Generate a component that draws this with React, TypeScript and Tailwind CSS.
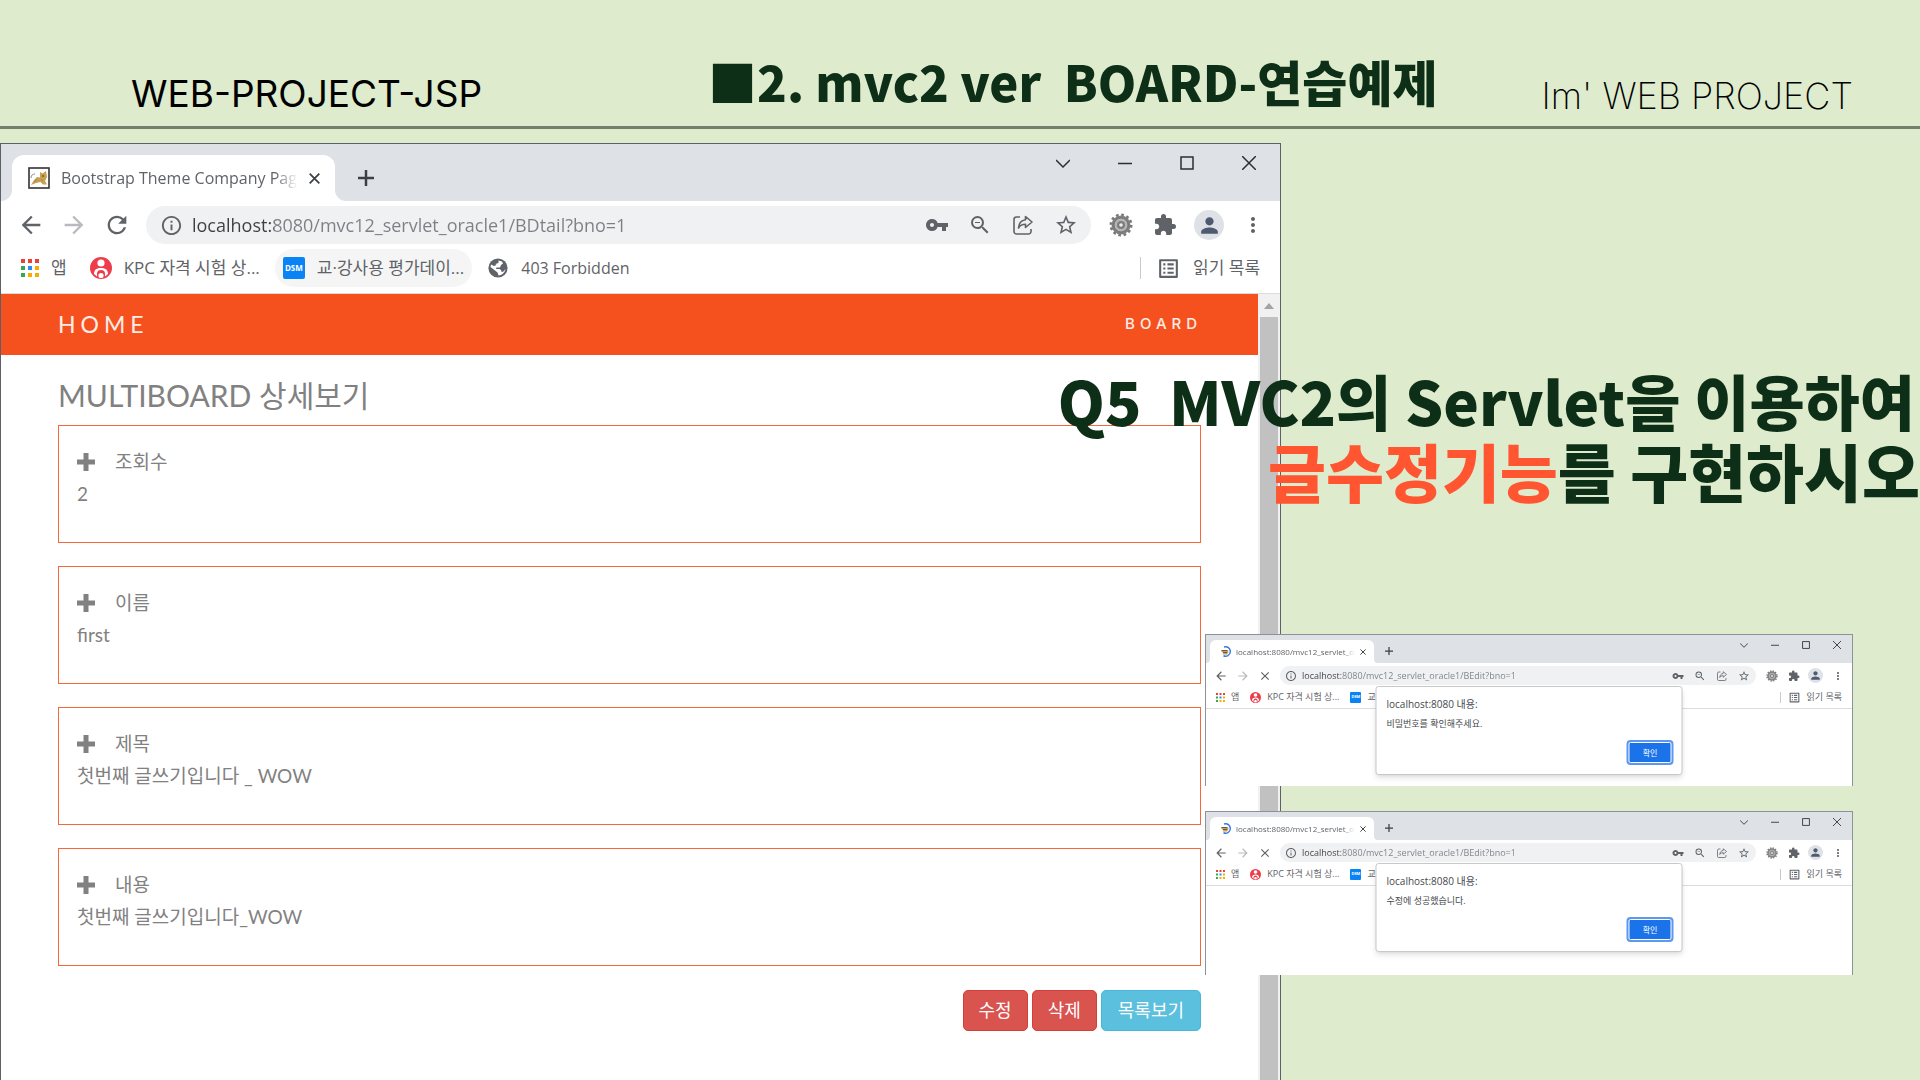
import React from "react";
import {
  MdArrowBack,
  MdArrowForward,
  MdClose,
  MdExtension,
  MdInfoOutline,
  MdListAlt,
  MdMoreVert,
  MdPerson,
  MdRefresh,
  MdStarBorder,
  MdVpnKey,
  MdZoomOut,
} from "react-icons/md";

type Size = "lg" | "sm";

const chrome = {
  lg: {
    strip: "h-[57px] pl-[11px]",
    tab: "w-[323px] h-[46px] pl-4 pr-[15px] gap-[11px] rounded-t-xl text-[16px]",
    foot: "size-[11px]",
    footCurveLeft: "rounded-br-xl",
    footCurveRight: "rounded-bl-xl",
    footLeft: "-left-[11px]",
    footRight: "-right-[11px]",
    favicon: "size-[22px]",
    tabClose: "size-[11px]",
    plus: "size-4 ml-[23px] mb-[15px]",
    control: "w-[62px] h-[38px]",
    controlIcon: "size-[14px]",
    toolbar: "h-[48px] pl-4 pr-3 gap-[15px]",
    nav: "size-[28px]",
    pill: "h-[38px] pl-[14px] pr-[13px]",
    info: "size-[23px] mr-[9px]",
    url: "text-[18px] bg-[linear-gradient(90deg,#3c4043_82px,#7c8085_82px)]",
    pillIcons: "gap-[19px]",
    pillIcon: "size-6",
    actions: "gap-[14px]",
    action: "size-[30px]",
    actionIcon: "size-6",
    person: "size-[25px]",
    bookmarks: "h-[45px] px-3 pb-[6px] gap-[7px] text-[17px]",
    bookmark: "h-[38px] px-2 gap-3 rounded-full",
    bookmarkIcon: "size-[22px]",
    apps: "size-[18px]",
    list: "size-[25px]",
    readSep: "h-[22px]",
    dsm: "size-[22px] text-[8px] rounded-[2px]",
  },
  sm: {
    strip: "h-[28px] pl-[4px]",
    tab: "w-[164px] h-[23px] pl-[10px] pr-2 gap-[5px] rounded-t-md text-[8px]",
    foot: "size-1",
    footCurveLeft: "rounded-br",
    footCurveRight: "rounded-bl",
    footLeft: "-left-1",
    footRight: "-right-1",
    favicon: "size-[11px]",
    tabClose: "size-[6px]",
    plus: "size-2 ml-[11px] mb-2",
    control: "w-[31px] h-[19px]",
    controlIcon: "size-2",
    toolbar: "h-[25px] pl-[8px] pr-[7px] gap-[8px]",
    nav: "size-[14px]",
    pill: "h-[19px] pl-[5px] pr-[6px]",
    info: "size-[12px] mr-[5px]",
    url: "text-[9px] bg-[linear-gradient(90deg,#3c4043_39px,#7c8085_39px)]",
    pillIcons: "gap-[10px]",
    pillIcon: "size-3",
    actions: "gap-[7px]",
    action: "size-[15px]",
    actionIcon: "size-3",
    person: "size-[13px]",
    bookmarks: "h-[21px] px-[6px] pb-[2px] gap-[3px] text-[9px]",
    bookmark: "h-[19px] px-1 gap-[6px] rounded-full",
    bookmarkIcon: "size-[11px]",
    apps: "size-[9px]",
    list: "size-[13px]",
    readSep: "h-[11px]",
    dsm: "size-[11px] text-[4px] rounded-[1px]",
  },
};

function CatIcon({ className }: { className: string }) {
  return (
    <svg viewBox="0 0 22 22" className={className}>
      <rect x="1" y="1" width="20" height="20" fill="#fff" stroke="#333" strokeWidth="1.6" />
      <path d="M3 18l3-5 3-3 3 .5L12 5l2.500 1.500L18 4l1 6-2 4 2 3.500h-4L12.500 15 8 16z" fill="#c9a04c" />
      <path d="M3 11c0-3 2-4 4-4M6 15l3-2M13 12l2 2" stroke="#8a8a8a" strokeWidth="1" fill="none" />
      <circle cx="15" cy="9" r=".8" fill="#333" />
    </svg>
  );
}

function LoadingIcon({ className }: { className: string }) {
  return (
    <svg viewBox="0 0 22 22" className={className}>
      <path d="M3 8h13l1 4-3 5H5l2-3-4-2z" fill="#c9a04c" />
      <path d="M3 9h11M6 13h8" stroke="#555" strokeWidth="1.800" />
      <path d="M8 2a9.500 9.500 0 1 1-1 17.500" fill="none" stroke="#3b78e7" strokeWidth="2.800" />
    </svg>
  );
}

function AppsIcon({ className }: { className: string }) {
  const fills = ["#ea4335", "#ea4335", "#ea4335", "#34a853", "#2a8cf4", "#f9ab00", "#34a853", "#f9ab00", "#f9ab00"];
  return (
    <svg viewBox="0 0 18 18" className={className}>
      {fills.map((fill, i) => (
        <rect key={i} x={(i % 3) * 7} y={Math.floor(i / 3) * 7} width="4" height="4" fill={fill} />
      ))}
    </svg>
  );
}

function KpcIcon({ className }: { className: string }) {
  return (
    <svg viewBox="0 0 22 22" className={className}>
      <circle cx="11" cy="11" r="11" fill="#ee3d4a" />
      <circle cx="11" cy="6" r="3.600" fill="#fff" />
      <path d="M4 17c0-4.500 3-6 7-6s7 1.500 7 6l-3 2.500a4 4 0 0 0-8 0z" fill="#fff" />
      <circle cx="11" cy="17" r="4" fill="#ee3d4a" />
      <circle cx="11" cy="18.500" r="2.600" fill="#fff" />
    </svg>
  );
}

function GlobeIcon({ className }: { className: string }) {
  return (
    <svg viewBox="0 0 22 22" className={className}>
      <circle cx="11" cy="11" r="9.600" fill="#5f6368" />
      <path d="M11.500 3.500l3.500 1 1 2-2 1.500-1 2.500H9.500l-.5 1.500h3.500l1.500 1 .5 2 2-.5 2-2.500c-.5 3.500-3.500 6.300-7 6.500l-1-3-2.500-2-4.500-3.500.5-2.500 3 1.500 2.500-1L8.500 7l3-1z" fill="#fff" />
    </svg>
  );
}

function ShareIcon({ className }: { className: string }) {
  return (
    <svg viewBox="0 0 24 24" className={className} fill="none" stroke="currentColor" strokeWidth="1.600" strokeLinejoin="round">
      <path d="M9 4H5.500A2.500 2.500 0 0 0 3 6.500v12A2.500 2.500 0 0 0 5.500 21h12a2.500 2.500 0 0 0 2.500-2.500V16" />
      <path d="M14.500 3.500 21 9l-6.500 5.500v-3.200c-3.500 0-5.500 1.200-7 3.700.3-4.500 2.700-7.500 7-8.200z" />
    </svg>
  );
}

function GearIcon({ className }: { className: string }) {
  return (
    <svg viewBox="0 0 24 24" className={className}>
      <circle cx="12" cy="12" r="10" fill="none" stroke="#777" strokeWidth="3" strokeDasharray="2.600 2.630" />
      <circle cx="12" cy="12" r="9.500" fill="#808080" />
      <circle cx="12" cy="12" r="7" fill="#b5b5b5" stroke="#666" strokeWidth=".8" />
      <circle cx="12" cy="12" r="4" fill="#7d7d7d" />
      <circle cx="12" cy="12" r="1.800" fill="#eee" />
    </svg>
  );
}

function StrokeIcon({ d, className }: { d: string; className: string }) {
  return (
    <svg viewBox="0 0 16 16" className={className} fill="none" stroke="currentColor" strokeWidth="2.500">
      <path d={d} />
    </svg>
  );
}

function WindowControls({ size }: { size: Size }) {
  const s = chrome[size];
  const shapes: [string, string][] = [
    ["탭 검색", "M0 4l7 7 7-7"],
    ["최소화", "M0 7.500h14"],
    ["최대화", "M1 1h12v12H1z"],
    ["닫기", "M0 0l14 14M14 0L0 14"],
  ];
  return (
    <div className="ml-auto flex self-start text-[#2c2e32]">
      {shapes.map(([label, d]) => (
        <button key={label} aria-label={label} className={`flex items-center justify-center ${s.control}`}>
          <svg viewBox="0 0 14 14" className={s.controlIcon} fill="none" stroke="currentColor" strokeWidth="1.500">
            <path d={d} />
          </svg>
        </button>
      ))}
    </div>
  );
}

interface BrowserProps {
  size: Size;
  title: string;
  url: string;
  loading?: boolean;
  className: string;
  children?: React.ReactNode;
}

function Browser({ size, title, url, loading, className, children }: BrowserProps) {
  const s = chrome[size];
  const Favicon = loading ? LoadingIcon : CatIcon;
  const Reload = loading ? MdClose : MdRefresh;
  return (
    <section className={`relative flex flex-col border border-b-0 bg-white text-[#5f6368] font-['Open_Sans','Noto_Sans_CJK_KR',sans-serif] ${className}`}>
      <div className={`flex items-end bg-[#dee1e6] ${s.strip}`}>
        <div className={`relative flex items-center bg-white ${s.tab}`}>
          <span className={`absolute bottom-0 bg-white ${s.foot} ${s.footLeft}`}>
            <span className={`block size-full bg-[#dee1e6] ${s.footCurveLeft}`} />
          </span>
          <span className={`absolute bottom-0 bg-white ${s.foot} ${s.footRight}`}>
            <span className={`block size-full bg-[#dee1e6] ${s.footCurveRight}`} />
          </span>
          <Favicon className={`shrink-0 ${s.favicon}`} />
          <span className="min-w-0 flex-1 overflow-hidden whitespace-nowrap mask-r-from-90%">{title}</span>
          <button aria-label="탭 닫기" className="text-[#3c4043]">
            <StrokeIcon d="M1 1l14 14M15 1L1 15" className={s.tabClose} />
          </button>
        </div>
        <button aria-label="새 탭" className="text-[#3c4043]">
          <StrokeIcon d="M8 0v16M0 8h16" className={s.plus} />
        </button>
        <WindowControls size={size} />
      </div>

      <div className={`flex items-center ${s.toolbar}`}>
        <button aria-label="뒤로">
          <MdArrowBack className={s.nav} />
        </button>
        <button aria-label="앞으로" className="text-[#b8babd]">
          <MdArrowForward className={s.nav} />
        </button>
        <button aria-label="새로고침">
          <Reload className={s.nav} />
        </button>
        <div className={`flex min-w-0 flex-1 items-center rounded-full bg-[#eff1f3] ${s.pill}`}>
          <MdInfoOutline className={`shrink-0 ${s.info}`} />
          <input
            aria-label="주소"
            defaultValue={url}
            className={`min-w-0 flex-1 bg-clip-text text-transparent outline-none ${s.url}`}
          />
          <div className={`flex ${s.pillIcons}`}>
            <button aria-label="비밀번호"><MdVpnKey className={s.pillIcon} /></button>
            <button aria-label="축소"><MdZoomOut className={s.pillIcon} /></button>
            <button aria-label="공유"><ShareIcon className={s.pillIcon} /></button>
            <button aria-label="북마크"><MdStarBorder className={s.pillIcon} /></button>
          </div>
        </div>
        <div className={`flex ${s.actions}`}>
          <button aria-label="설정" className={`flex items-center justify-center ${s.action}`}>
            <GearIcon className={s.actionIcon} />
          </button>
          <button aria-label="확장 프로그램" className={`flex items-center justify-center ${s.action}`}>
            <MdExtension className={s.actionIcon} />
          </button>
          <button aria-label="프로필" className={`flex items-center justify-center rounded-full bg-[#dee1e6] text-[#4e5a70] ${s.action}`}>
            <MdPerson className={s.person} />
          </button>
          <button aria-label="메뉴" className={`flex items-center justify-center ${s.action}`}>
            <MdMoreVert className={s.actionIcon} />
          </button>
        </div>
      </div>

      <nav className={`flex items-center whitespace-nowrap border-b border-[#dcdcdc] ${s.bookmarks}`}>
        <a href="#apps" className={`flex items-center ${s.bookmark}`}>
          <AppsIcon className={s.apps} />앱
        </a>
        <a href="#kpc" className={`flex items-center ${s.bookmark}`}>
          <KpcIcon className={s.bookmarkIcon} />KPC 자격 시험 상...
        </a>
        <a href="#dsm" className={`flex items-center ${loading ? "" : "bg-[#f5f5f5]"} ${s.bookmark}`}>
          <span className={`flex items-center justify-center bg-[#0a84f5] font-bold text-white ${s.dsm}`}>DSM</span>
          {loading ? "교" : "교·강사용 평가데이..."}
        </a>
        {!loading && (
          <a href="#forbidden" className={`flex items-center text-[16px] ${s.bookmark}`}>
            <GlobeIcon className={s.bookmarkIcon} />403 Forbidden
          </a>
        )}
        <span className={`ml-auto w-px bg-[#c9cbce] ${s.readSep}`} />
        <button className={`flex items-center ${s.bookmark}`}>
          <MdListAlt className={s.list} />읽기 목록
        </button>
      </nav>
      {children}
    </section>
  );
}

function Field({ label, value }: { label: string; value: string }) {
  return (
    <div className="h-[118px] border border-[#f4683c] px-[18px] pt-5">
      <dt className="flex h-8 items-center gap-5 text-[19px]">
        <svg viewBox="0 0 18 18" className="size-[18px]" fill="currentColor">
          <path d="M6.500 0h5v6.500H18v5h-6.500V18h-5v-6.500H0v-5h6.500z" />
        </svg>
        {label}
      </dt>
      <dd className="flex h-8 items-center text-[19px]">{value}</dd>
    </div>
  );
}

function AlertWindow({ message, className }: { message: string; className: string }) {
  return (
    <Browser
      size="sm"
      loading
      title="localhost:8080/mvc12_servlet_oracle1"
      url="localhost:8080/mvc12_servlet_oracle1/BEdit?bno=1"
      className={`border-[#8d9199] ${className}`}
    >
      <div
        role="alertdialog"
        aria-label="localhost:8080"
        className="absolute top-[51px] left-1/2 flex h-[89px] w-[307px] -translate-x-1/2 flex-col rounded-[3px] border border-[#c8c8c8] bg-white px-[10px] pt-[10px] pb-[11px] text-[#45484c] shadow-md"
      >
        <p className="text-[10px] leading-[14px]">localhost:8080 내용:</p>
        <p className="mt-[6px] text-[9px] leading-[14px]">{message}</p>
        <button className="mt-auto h-[21px] w-[43px] self-end rounded-[2px] border border-white bg-[#1a73e8] text-[8px] text-white ring-2 ring-[#5c97f0]">
          확인
        </button>
      </div>
    </Browser>
  );
}

const fields = [
  { label: "조회수", value: "2" },
  { label: "이름", value: "first" },
  { label: "제목", value: "첫번째 글쓰기입니다 _ WOW" },
  { label: "내용", value: "첫번째 글쓰기입니다_WOW" },
];

export default function App() {
  return (
    <div className="relative flex min-h-screen flex-col overflow-hidden bg-[#deebcc]">
      <header className="flex h-[129px] items-end whitespace-nowrap border-b-3 border-[#75806b] pr-[67px] pb-[9px] pl-[131px]">
        <p className="pb-[2px] font-['Inter'] text-[37px] leading-[42px] text-black">WEB-PROJECT-JSP</p>
        <h1 className="mr-[104px] ml-auto pb-[6px] font-['Noto_Sans_CJK_KR',sans-serif] text-[49px] leading-[60px] font-black whitespace-pre text-[#0e2f17]">
          ■2. mvc2 ver  BOARD-연습예제
        </h1>
        <p className="font-['Inter'] text-[36px] leading-[42px] font-extralight text-black">Im' WEB PROJECT</p>
      </header>

      <main className="flex flex-1 pt-[14px]">
        <Browser
          size="lg"
          title="Bootstrap Theme Company Page"
          url="localhost:8080/mvc12_servlet_oracle1/BDtail?bno=1"
          className="w-[calc(66.67%+1px)] border-[#5d6069]"
        >
          <div className="flex flex-1 font-['Lato','Noto_Sans_CJK_KR',sans-serif] text-[#818181]">
            <div className="flex-1">
              <nav className="flex h-[61px] items-center justify-between bg-[#f5511e] pr-[56px] pl-[57px] text-white/90">
                <a href="#home" className="text-[23px] tracking-[5px]">HOME</a>
                <a href="#board" className="font-['Inter'] text-[15px] font-medium tracking-[5px]">BOARD</a>
              </nav>
              <div className="pr-[57px] pl-[57px]">
                <h2 className="pt-[18px] text-[30px] leading-[44px]">MULTIBOARD 상세보기</h2>
                <dl className="mt-2 flex flex-col gap-[23px]">
                  {fields.map((f) => (
                    <Field key={f.label} label={f.label} value={f.value} />
                  ))}
                </dl>
                <div className="mt-[24px] flex justify-end gap-1 text-[18px] text-white">
                  <button className="h-[41px] rounded-[5px] border border-[#d43f3a] bg-[#d9534f] px-[15px]">수정</button>
                  <button className="h-[41px] rounded-[5px] border border-[#d43f3a] bg-[#d9534f] px-[15px]">삭제</button>
                  <button className="h-[41px] rounded-[5px] border border-[#46b8da] bg-[#5bc0de] px-4">목록보기</button>
                </div>
              </div>
            </div>
            <div className="flex w-[22px] flex-col items-center bg-[#f1f1f1]">
              <svg viewBox="0 0 10 6" className="mt-[9px] mb-2 h-[6px] w-[10px]" fill="#a3a3a3">
                <path d="M0 6l5-6 5 6z" />
              </svg>
              <div className="w-[18px] flex-1 bg-[#c1c1c1]" />
            </div>
          </div>
        </Browser>
      </main>

      <div className="absolute top-[365px] right-0 text-right font-['Noto_Sans_CJK_KR',sans-serif] leading-[70px] font-black text-[#0e2f17]">
        <p className="pr-[5px] text-[60px] whitespace-pre">Q5  MVC2의 Servlet을 이용하여</p>
        <p className="text-[63px]">
          <span className="text-[#ff5530]">글수정기능</span>를 구현하시오
        </p>
      </div>

      <div className="absolute top-[634px] right-[67px] flex w-[648px] flex-col gap-[25px]">
        <AlertWindow message="비밀번호를 확인해주세요." className="h-[152px]" />
        <AlertWindow message="수정에 성공했습니다." className="h-[164px]" />
      </div>
    </div>
  );
}
